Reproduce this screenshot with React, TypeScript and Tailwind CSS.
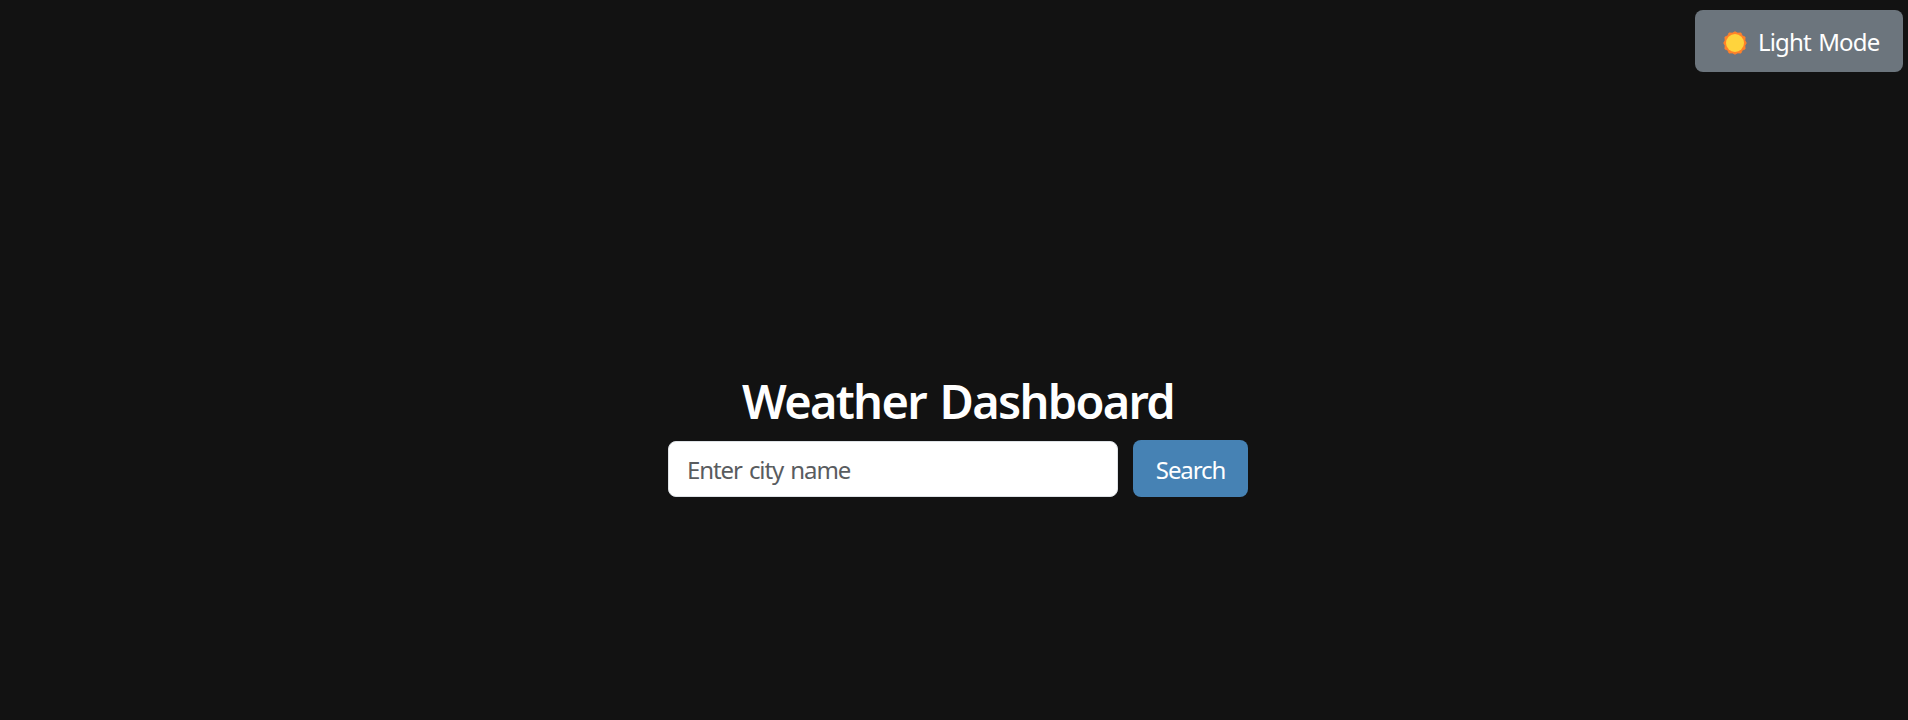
function SunIcon() {
  return (
    <svg className="mt-px h-6 w-6 shrink-0" viewBox="0 0 24 24" aria-hidden="true">
      <path
        fill="#ff8229"
        d="M12 .7 14.7 2.1 18 1.9 19.2 4.8 22.1 6 21.9 9.3 23.3 12 21.9 14.7 22.1 18 19.2 19.2 18 22.1 14.7 21.9 12 23.3 9.3 21.9 6 22.1 4.8 19.2 1.9 18 2.1 14.7 .7 12 2.1 9.3 1.9 6 4.8 4.8 6 1.9 9.3 2.1Z"
        stroke="#ff8229"
        strokeWidth=".8"
        strokeLinejoin="round"
      />
      <circle cx="12" cy="12" r="9" fill="#ffd43d" />
    </svg>
  );
}

export default function App() {
  return (
    <div className="flex h-[720px] flex-col bg-[#121212] font-['Noto_Sans','Open_Sans',sans-serif] text-2xl text-white">
      <header className="flex justify-end pt-[10px] pr-[5px]">
        <button className="flex h-[62px] w-[208px] items-center rounded-lg bg-[#6c757d] pt-[2px] pl-[28px] whitespace-nowrap">
          <SunIcon />
          <span className="ml-[11px] tracking-[-0.85px] [word-spacing:2px]">Light Mode</span>
        </button>
      </header>
      <main className="mt-[300px] flex flex-col items-center pl-2">
        <h1 className="h-[68px] text-[47px] leading-[58px] font-semibold tracking-[-1.7px] [word-spacing:3px] whitespace-nowrap">
          Weather Dashboard
        </h1>
        <form className="flex items-end gap-[15px]" onSubmit={(e) => e.preventDefault()}>
          <input
            className="h-14 w-[450px] rounded-lg border border-[#dee2e6] bg-white pt-px pl-[18px] tracking-[-1.1px] [word-spacing:2px] text-[#212529] outline-none placeholder:text-[#595c5f]"
            placeholder="Enter city name"
            aria-label="City"
          />
          <button className="h-[57px] w-[115px] rounded-lg bg-[#4682b4] pt-[2px] tracking-[-1.1px]">
            Search
          </button>
        </form>
      </main>
    </div>
  );
}
